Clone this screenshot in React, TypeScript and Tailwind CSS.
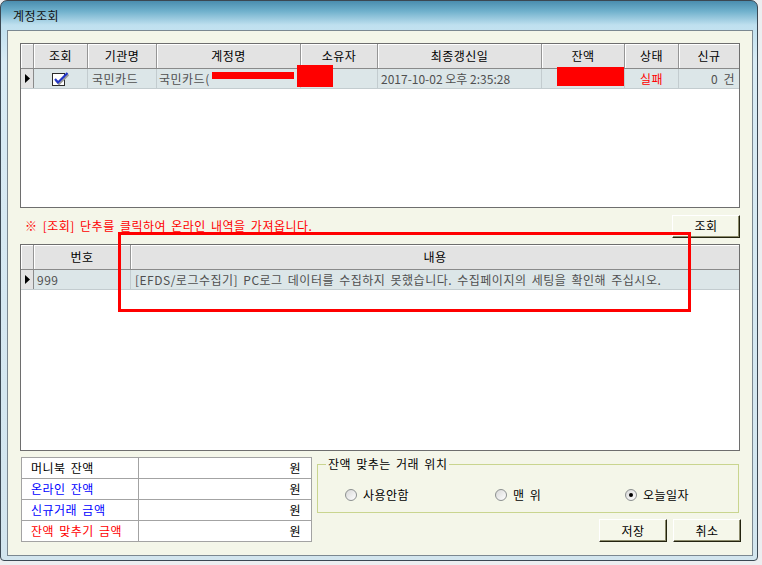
import React from "react";

const headCls =
  "flex items-center justify-center bg-[#e3e3e3] border-r border-[#959595] shadow-[inset_1px_1px_0_#ffffff] text-black";
const cellCls = "flex items-center border-r border-[#c3cccf] text-[#505050] whitespace-nowrap overflow-hidden";

function CheckIcon() {
  return (
    <svg width="17" height="15" viewBox="0 0 17 15">
      <rect x="0.5" y="2.5" width="12" height="12" fill="#ffffff" stroke="#2b2b2b" />
      <path d="M3 8.5 L6 12 L15.5 2.5" fill="none" stroke="#9a9a9a" strokeWidth="2" transform="translate(1 1)" />
      <path d="M3 8 L6 11.5 L15.5 2" fill="none" stroke="#2236c8" strokeWidth="2.2" />
    </svg>
  );
}

function RowArrow() {
  return (
    <svg width="5" height="9" viewBox="0 0 5 9">
      <polygon points="0,0 5,4.5 0,9" fill="#000000" />
    </svg>
  );
}

function Radio({ checked }: { checked?: boolean }) {
  return (
    <span className="w-[12px] h-[12px] rounded-full border border-[#8c9090] bg-[linear-gradient(135deg,#d8d8d8,#ffffff)] flex items-center justify-center shrink-0">
      {checked && <span className="w-[4px] h-[4px] rounded-full bg-black" />}
    </span>
  );
}

function Btn({ children }: { children: React.ReactNode }) {
  return (
    <button className="w-[68px] h-[23px] bg-[#f5f7ea] border border-t-white border-l-white border-r-[#23230f] border-b-[#23230f] shadow-[inset_-1px_-1px_0_#8c8c6c] text-[12px] leading-[14px] text-black flex items-center justify-center">
      {children}
    </button>
  );
}

export default function App() {
  return (
    <div className="relative w-[762px] h-[565px] overflow-hidden bg-[#eceef0] font-['Noto_Sans_CJK_KR',sans-serif] text-[12px] leading-[14px] tracking-[0.5px] [word-spacing:2px]">
      <div className="w-[758px] h-[561px] rounded-t-[7px] rounded-b-[4px] border border-[#3b4853] bg-[linear-gradient(180deg,#4a8daf_0px,#6fb0cc_10px,#bfe0ef_24px,#d8ebf4_60px,#d2e5ee_100%)] flex flex-col">
        <div className="h-[29px] flex items-center pl-[12px] text-[12px] text-[#111]">계정조회</div>
        <div className="ml-[6px] w-[746px] h-[526px] border border-[#7b8891] bg-[#f4f6e9] flex flex-col pl-[12px] pt-[12px]">
          {/* Top grid */}
          <div className="w-[720px] h-[165px] border border-[#6e6e6e] bg-white flex flex-col">
            <div className="flex h-[25px] border-b border-[#8a8a8a]">
              <div className={`w-[13px] ${headCls}`} />
              <div className={`w-[54px] ${headCls}`}>조회</div>
              <div className={`w-[69px] ${headCls}`}>기관명</div>
              <div className={`w-[144px] ${headCls}`}>계정명</div>
              <div className={`w-[77px] ${headCls}`}>소유자</div>
              <div className={`w-[164px] ${headCls}`}>최종갱신일</div>
              <div className={`w-[83px] ${headCls}`}>잔액</div>
              <div className={`w-[54px] ${headCls}`}>상태</div>
              <div className={`flex-1 ${headCls} border-r-0`}>신규</div>
            </div>
            <div className="flex h-[20px] bg-[#dce6e8] border-b border-[#c3cccf]">
              <div className="w-[13px] flex items-center justify-center bg-[#e3e3e3] border-r border-[#8a8a8a] pl-[1px]">
                <RowArrow />
              </div>
              <div className={`w-[54px] ${cellCls} justify-center`}>
                <CheckIcon />
              </div>
              <div className={`w-[69px] ${cellCls} pl-[4px]`}>국민카드</div>
              <div className={`w-[144px] ${cellCls} pl-[2px]`}>국민카드(</div>
              <div className={`w-[77px] ${cellCls}`} />
              <div className={`w-[164px] ${cellCls} pl-[3px] tracking-normal [word-spacing:0px]`}>2017-10-02 오후 2:35:28</div>
              <div className={`w-[83px] ${cellCls}`} />
              <div className={`w-[54px] ${cellCls} justify-center text-[#ff0000]`}>실패</div>
              <div className={`flex-1 ${cellCls} border-r-0 justify-end pr-[4px]`}>0 건</div>
            </div>
          </div>

          {/* Message row */}
          <div className="w-[720px] h-[36px] flex items-center justify-between pl-[5px]">
            <span className="text-[#ff0000]">※ [조회] 단추를 클릭하여 온라인 내역을 가져옵니다.</span>
            <Btn>조회</Btn>
          </div>

          {/* Lower grid */}
          <div className="w-[720px] h-[207px] border border-[#6e6e6e] bg-white flex flex-col">
            <div className="flex h-[25px] border-b border-[#8a8a8a]">
              <div className={`w-[13px] ${headCls}`} />
              <div className={`w-[97px] ${headCls}`}>번호</div>
              <div className={`flex-1 ${headCls} border-r-0`}>내용</div>
            </div>
            <div className="flex h-[20px] bg-[#dce6e8] border-b border-[#c3cccf]">
              <div className="w-[13px] flex items-center justify-center bg-[#e3e3e3] border-r border-[#8a8a8a] pl-[1px]">
                <RowArrow />
              </div>
              <div className={`w-[97px] ${cellCls} pl-[3px]`}>999</div>
              <div className={`flex-1 ${cellCls} border-r-0 pl-[4px]`}>
                [EFDS/로그수집기] PC로그 데이터를 수집하지 못했습니다. 수집페이지의 세팅을 확인해 주십시오.
              </div>
            </div>
          </div>

          {/* Bottom section */}
          <div className="flex mt-[6px]">
            <div className="ml-[1px] w-[291px] border border-[#a3a3a3] bg-white flex flex-col">
              {[
                { t: "머니북 잔액", c: "text-black" },
                { t: "온라인 잔액", c: "text-[#0000ff]" },
                { t: "신규거래 금액", c: "text-[#0000ff]" },
                { t: "잔액 맞추기 금액", c: "text-[#ff0000]" },
              ].map((r, i) => (
                <div key={i} className={`flex ${i < 3 ? "h-[21px] border-b border-[#a3a3a3]" : "h-[20px]"}`}>
                  <div className={`w-[117px] border-r border-[#a3a3a3] flex items-center pl-[9px] ${r.c}`}>{r.t}</div>
                  <div className="flex-1 flex items-center justify-end pr-[10px] text-black">원</div>
                </div>
              ))}
            </div>
            <div className="ml-[5px] w-[424px] flex flex-col">
              <div className="relative mt-[7px] w-[422px] h-[49px] border border-[#c9d58f] flex items-center pt-[12px]">
                <span className="absolute -top-[8px] left-[8px] px-[2px] bg-[#f4f6e9] text-black">잔액 맞추는 거래 위치</span>
                <div className="w-[177px] pl-[27px] flex items-center gap-[6px]">
                  <Radio />
                  <span>사용안함</span>
                </div>
                <div className="w-[130px] flex items-center gap-[6px]">
                  <Radio />
                  <span>맨 위</span>
                </div>
                <div className="flex items-center gap-[6px]">
                  <Radio checked />
                  <span>오늘일자</span>
                </div>
              </div>
              <div className="mt-[6px] flex justify-end gap-[6px]">
                <Btn>저장</Btn>
                <Btn>취소</Btn>
              </div>
            </div>
          </div>
        </div>
      </div>

      {/* Redaction marks and annotation overlay */}
      <div className="absolute left-[212px] top-[72px] w-[82px] h-[7px] bg-[#ff0000]" />
      <div className="absolute left-[297px] top-[65px] w-[36px] h-[22px] bg-[#ff0000]" />
      <div className="absolute left-[557px] top-[67px] w-[67px] h-[19px] bg-[#ff0000]" />
      <div className="absolute left-[118px] top-[232px] w-[573px] h-[80px] border-[3px] border-[#ff0000]" />
    </div>
  );
}
